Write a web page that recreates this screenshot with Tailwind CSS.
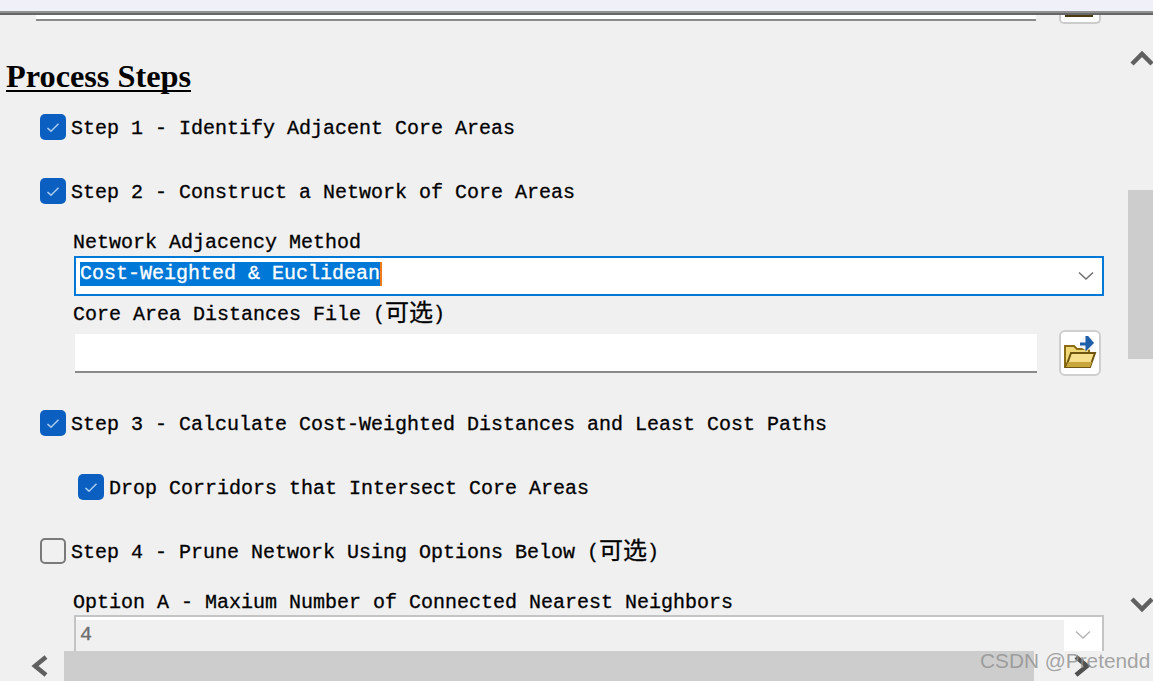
<!DOCTYPE html>
<html lang="zh">
<head>
  <meta charset="UTF-8" />
  <title>Process Steps</title>
  <script src="https://cdn.jsdelivr.net/npm/@tailwindcss/browser@4"></script>
</head>
<body class="bg-[#f0f0f0]">
  <div class="relative w-[1153px] h-[681px] overflow-hidden font-['Liberation_Mono','Noto_Sans_CJK_SC',monospace] text-[20px] leading-[24px] text-black [-webkit-text-stroke-width:0.3px]">

    <!-- top edge -->
    <div class="h-[11px] bg-[#f0f0f8]"></div>
    <div class="h-[2px] bg-[#909090]"></div>
    <div class="h-[2px] bg-[#666666]"></div>

    <!-- file row cut off by the panel edge -->
    <div class="flex items-start h-[9px]">
      <div class="ml-[36px] w-[1000px] h-[6px] bg-white border-b-2 border-[#8a8a8a]"></div>
      <div class="ml-[23px] w-[42px] h-[9px] bg-white border-2 border-t-0 border-[#cccccc] rounded-b-[5px] flex justify-center">
        <div class="w-[28px] h-[2px] bg-[#4a3a10] -ml-[2px]"></div>
      </div>
    </div>

    <h1 class="mt-[35px] ml-[6px] w-fit h-[33px] border-b-2 border-black font-['Liberation_Serif',serif] font-bold text-[32.3px] leading-[34px] [-webkit-text-stroke-width:0px]">Process Steps</h1>

    <!-- step 1 -->
    <div class="mt-[22px] ml-[40px] flex items-center h-[26px]">
      <div class="w-[26px] h-[26px] rounded-[5px] bg-[#0a5fc0] flex items-center justify-center">
        <svg width="14" height="11" viewBox="0 0 14 11" fill="none"><path d="M1.5 6 L5 9.2 L12.5 1.8" stroke="#a9cdf0" stroke-width="1.6"/></svg>
      </div>
      <span class="ml-[5px] mt-[4px]">Step 1 - Identify Adjacent Core Areas</span>
    </div>

    <!-- step 2 -->
    <div class="mt-[38px] ml-[40px] flex items-center h-[26px]">
      <div class="w-[26px] h-[26px] rounded-[5px] bg-[#0a5fc0] flex items-center justify-center">
        <svg width="14" height="11" viewBox="0 0 14 11" fill="none"><path d="M1.5 6 L5 9.2 L12.5 1.8" stroke="#a9cdf0" stroke-width="1.6"/></svg>
      </div>
      <span class="ml-[5px] mt-[4px]">Step 2 - Construct a Network of Core Areas</span>
    </div>

    <div class="mt-[27px] ml-[73px] h-[23px]">Network Adjacency Method</div>

    <div class="mt-[2px] ml-[74px] w-[1030px] h-[40px] bg-white border-2 border-[#0078d7] flex items-center justify-between pl-[4px] pr-[8px]">
      <span class="bg-[#0078d7] text-white border-r-2 border-[#f07a1a] h-[24px] mb-[4px]">Cost-Weighted &amp; Euclidean</span>
      <svg width="16" height="10" viewBox="0 0 16 10" fill="none"><path d="M1 1.5 L8 8 L15 1.5" stroke="#707070" stroke-width="1.5"/></svg>
    </div>

    <div class="mt-[7px] ml-[73px] h-[23px] flex items-center">Core Area Distances File (<span class="text-[24px]">可选</span>)</div>

    <div class="mt-[4px] flex items-center h-[46px]">
      <div class="ml-[75px] w-[962px] h-[39px] bg-white border-b-2 border-[#8a8a8a]"></div>
      <div class="ml-[22px] w-[42px] h-[46px] bg-white border-2 border-[#cfcfcf] rounded-[6px] flex items-center justify-center">
        <svg width="34" height="34" viewBox="0 0 34 34">
          <path d="M2 10 H11 L14 13 H26 V17 H9 L3 31 H2 Z" fill="#f0d878" stroke="#8a6d14" stroke-width="2"/>
          <path d="M3 31 L8 17 H32 L27 31 Z" fill="#f6e08e" stroke="#6e5610" stroke-width="2"/>
          <path d="M3 31 H27 L29 26 H5 Z" fill="#c9a63c"/>
          <circle cx="24" cy="7" r="7" fill="#f4f7fa"/>
          <path d="M17 8 H28 M24 1 L29 7 L24 12 Z" stroke="#1f5fa8" stroke-width="3" fill="#0b4f9e"/>
        </svg>
      </div>
    </div>

    <!-- step 3 -->
    <div class="mt-[34px] ml-[40px] flex items-center h-[26px]">
      <div class="w-[26px] h-[26px] rounded-[5px] bg-[#0a5fc0] flex items-center justify-center">
        <svg width="14" height="11" viewBox="0 0 14 11" fill="none"><path d="M1.5 6 L5 9.2 L12.5 1.8" stroke="#a9cdf0" stroke-width="1.6"/></svg>
      </div>
      <span class="ml-[5px] mt-[4px]">Step 3 - Calculate Cost-Weighted Distances and Least Cost Paths</span>
    </div>

    <div class="mt-[38px] ml-[78px] flex items-center h-[26px]">
      <div class="w-[26px] h-[26px] rounded-[5px] bg-[#0a5fc0] flex items-center justify-center">
        <svg width="14" height="11" viewBox="0 0 14 11" fill="none"><path d="M1.5 6 L5 9.2 L12.5 1.8" stroke="#a9cdf0" stroke-width="1.6"/></svg>
      </div>
      <span class="ml-[5px] mt-[4px]">Drop Corridors that Intersect Core Areas</span>
    </div>

    <!-- step 4 -->
    <div class="mt-[38px] ml-[40px] flex items-center h-[26px]">
      <div class="w-[26px] h-[26px] rounded-[5px] border-2 border-[#7a7a7a]"></div>
      <span class="ml-[5px] mt-[4px] flex items-center">Step 4 - Prune Network Using Options Below (<span class="text-[24px]">可选</span>)</span>
    </div>

    <div class="mt-[27px] ml-[73px] h-[22px]">Option A - Maxium Number of Connected Nearest Neighbors</div>

    <div class="mt-[2px] ml-[74px] w-[1030px] h-[40px] border-2 border-b-0 border-[#c4c4c4] flex">
      <div class="flex-1 border-t-[3px] border-white pl-[4px] pt-[3px] text-[#6d6d6d]">4</div>
      <div class="w-[38px] bg-white flex justify-center pt-[13px]">
        <svg width="16" height="10" viewBox="0 0 16 10" fill="none"><path d="M1 1.5 L8 8 L15 1.5" stroke="#b5b5b5" stroke-width="1.5"/></svg>
      </div>
    </div>

    <!-- vertical scrollbar -->
    <svg class="absolute left-[1130px] top-[50px]" width="23" height="16" viewBox="0 0 23 16" fill="none"><path d="M2 14 L12 4 L22 14" stroke="#606060" stroke-width="4.5"/></svg>
    <div class="absolute left-[1128px] top-[190px] w-[25px] h-[169px] bg-[#cdcdcd]"></div>
    <svg class="absolute left-[1130px] top-[597px]" width="23" height="16" viewBox="0 0 23 16" fill="none"><path d="M2 2 L12 12 L22 2" stroke="#606060" stroke-width="4.5"/></svg>

    <!-- horizontal scrollbar -->
    <div class="absolute left-0 top-[651px] w-full h-[30px] bg-[#f0f0f0]">
      <div class="absolute left-[64px] top-0 w-[970px] h-full bg-[#cdcdcd]"></div>
      <svg class="absolute left-[29px] top-[4px]" width="20" height="22" viewBox="0 0 20 22" fill="none"><path d="M17 2 L6 11 L17 20" stroke="#606060" stroke-width="4.5"/></svg>
      <svg class="absolute left-[1073px] top-[4px]" width="20" height="22" viewBox="0 0 20 22" fill="none"><path d="M3 2 L14 11 L3 20" stroke="#505050" stroke-width="4.5"/></svg>
    </div>

    <!-- watermark -->
    <div class="absolute left-[980px] top-[649px] font-['Liberation_Sans',sans-serif] text-[20.8px] leading-[24px] text-[#8f8f8f]/80 whitespace-nowrap [-webkit-text-stroke-width:0px]">CSDN @Pretendd</div>
  </div>
</body>
</html>
